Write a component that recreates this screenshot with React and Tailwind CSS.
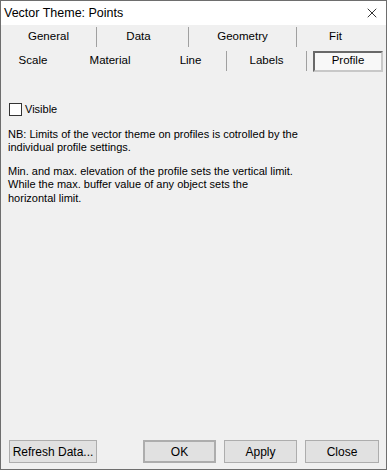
import { X } from 'lucide-react';

const font = { fontFamily: '"Liberation Sans", Arial, sans-serif' };

const Btn = ({ children, className = '' }) => (
    <div className={`h-[23px] flex items-center justify-center bg-[#e1e1e1] border border-[#adadad] text-[12px] text-black ${className}`}>
        {children}
    </div>
);

export default function App() {
    return (
        <div className="w-[387px] h-[470px] bg-[#f0f0f0] border border-[#6e6e6e] flex flex-col" style={font}>
            {/* title bar */}
            <div className="h-[24px] bg-white flex items-center justify-between pl-[3px] pr-[6px] shrink-0">
                <span className="text-[12.5px] text-black">Vector Theme: Points</span>
                <X size={16} strokeWidth={1.2} className="text-black" />
            </div>

            {/* tabs row 1 */}
            <div className="h-[24px] flex items-center text-[11.5px] text-black">
                <div className="w-[95px] text-center">General</div>
                <div className="w-px h-[20px] bg-[#a0a0a0]" />
                <div className="w-[91px] text-center pr-[8px]">Data</div>
                <div className="w-px h-[20px] bg-[#a0a0a0]" />
                <div className="w-[107px] text-center">Geometry</div>
                <div className="w-px h-[20px] bg-[#a0a0a0]" />
                <div className="flex-1 text-center pr-[12px]">Fit</div>
            </div>

            {/* tabs row 2 */}
            <div className="h-[24px] flex items-center text-[11.5px] text-black">
                <div className="w-[64px] text-center">Scale</div>
                <div className="w-[90px] text-center">Material</div>
                <div className="w-[71px] text-center">Line</div>
                <div className="w-px h-[20px] bg-[#a0a0a0]" />
                <div className="w-[79px] text-center">Labels</div>
                <div className="w-px h-[20px] bg-[#a0a0a0]" />
                <div className="w-[6px]" />
                <div className="w-[70px] h-[21px] flex items-center justify-center border-2 border-t-[#696969] border-l-[#696969] border-b-[#c8c8c8] border-r-[#c8c8c8] bg-[#f8f8f8]">
                    Profile
                </div>
            </div>

            {/* content */}
            <div className="flex-1 px-[7px] pt-[30px] text-[11px] text-black leading-[13.5px]">
                <label className="flex items-center gap-[3px]">
                    <span className="w-[13px] h-[13px] border border-[#333] bg-white ml-px" />
                    <span>Visible</span>
                </label>
                <p className="mt-[11px]">
                    NB: Limits of the vector theme on profiles is cotrolled by the<br />
                    individual profile settings.
                </p>
                <p className="mt-[10px]">
                    Min. and max. elevation of the profile sets the vertical limit.<br />
                    While the max. buffer value of any object sets the<br />
                    horizontal limit.
                </p>
            </div>

            {/* footer buttons */}
            <div className="flex items-center pl-[8px] pb-[6px] shrink-0">
                <Btn className="w-[88px]">Refresh Data...</Btn>
                <Btn className="w-[73px] ml-[46px] border-2 border-[#0078d7]">OK</Btn>
                <Btn className="w-[73px] ml-[8px]">Apply</Btn>
                <Btn className="w-[74px] ml-[8px]">Close</Btn>
            </div>
        </div>
    );
}
